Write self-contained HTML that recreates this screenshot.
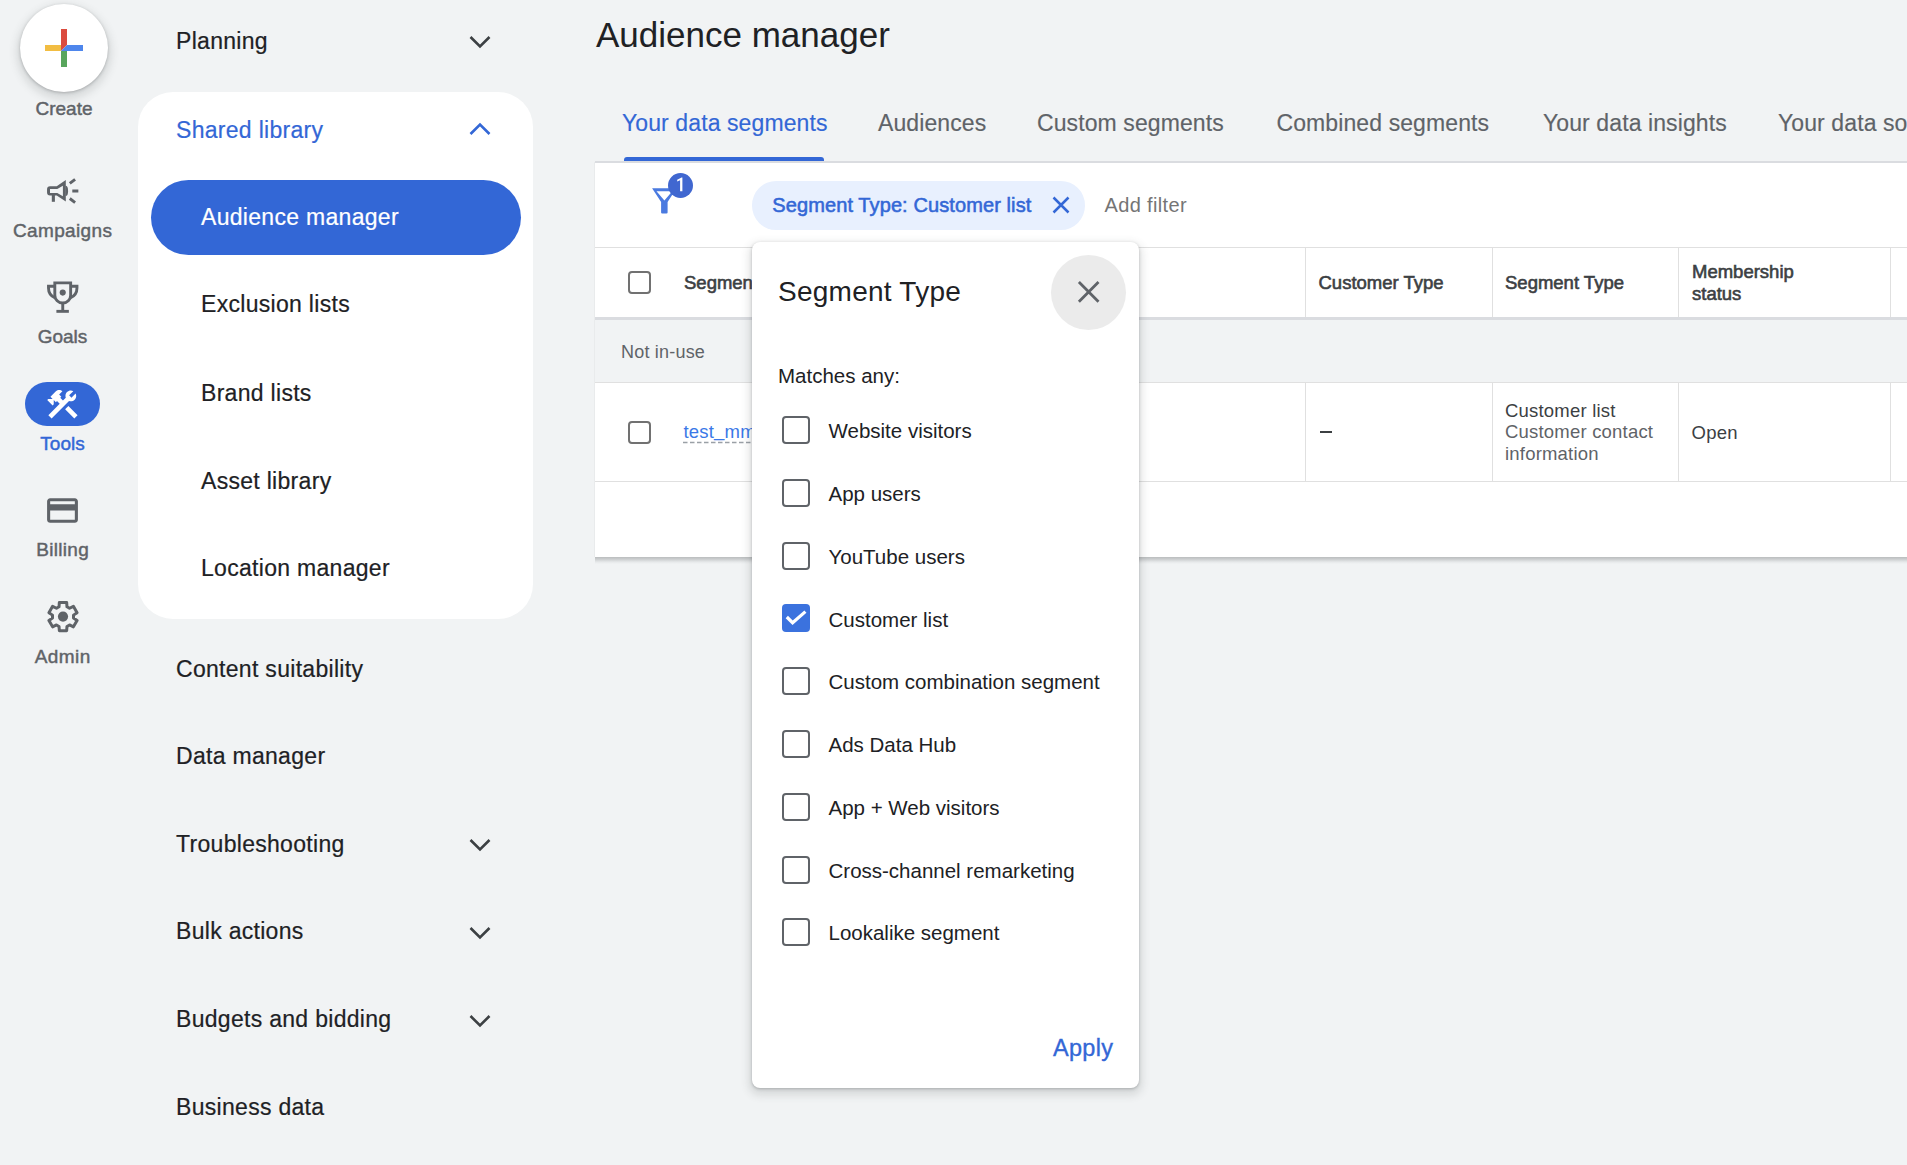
<!DOCTYPE html>
<html><head><meta charset="utf-8">
<style>
html,body{margin:0;padding:0;}
body{width:1907px;height:1165px;overflow:hidden;background:#f1f3f4;position:relative;font-family:"Liberation Sans",sans-serif;color:#202124;}
.a{position:absolute;}
.t{position:absolute;white-space:nowrap;line-height:normal;}
.cb{position:absolute;box-sizing:border-box;border:2.9px solid #5f6368;border-radius:4px;}
.vl{position:absolute;width:1px;background:#e0e0e0;}
</style></head><body>

<div class="a" style="left:20px;top:4px;width:88px;height:88px;border-radius:50%;background:#fff;box-shadow:0 1px 3px rgba(60,64,67,.30),0 4px 8px 3px rgba(60,64,67,.15);"></div>
<svg class="a" style="left:45px;top:29px" width="38" height="38" viewBox="0 0 38 38">
<rect x="16" y="0" width="6" height="16" fill="#db4b3e"/>
<polygon points="16,16 22,16 16,22" fill="#db4b3e"/>
<rect x="0" y="16" width="16" height="6" fill="#f2bd42"/>
<rect x="16" y="22" width="6" height="16" fill="#58a55c"/>
<rect x="22" y="16" width="16" height="6" fill="#4e86ec"/>
<polygon points="22,16 22,22 16,22" fill="#4e86ec"/>
</svg>
<div class="t" style="left:0;width:128px;text-align:center;top:98.31px;font-size:19px;color:#5f6368;letter-spacing:0px;text-indent:0px;-webkit-text-stroke:0.45px #5f6368">Create</div>
<svg class="a" style="left:42px;top:172px" width="42" height="38" viewBox="0 0 42 38">
<path fill="#5f6368" fill-rule="evenodd" d="M5.05,17.2 Q5.05,14.2 8.05,14.2 L14.7,14.2 L23.8,8 L23.8,29.5 L14.7,23.6 L8.05,23.6 Q5.05,23.6 5.05,20.6 Z M8,17.1 L15.3,17.1 L20.9,13.7 L20.9,24.3 L15.3,20.9 L8,20.9 Z"/>
<path fill="#5f6368" d="M23.5,13.7 A2.6 5.2 0 0 1 23.5,24.1 Z"/>
<rect x="9.8" y="22.5" width="3.1" height="7.3" fill="#5f6368"/>
<path stroke="#5f6368" stroke-width="2.9" d="M27.8,11.4 L33.1,7.3 M30.3,19.07 H36.35 M27.8,26.5 L33.1,30.6"/>
</svg>
<div class="t" style="left:0;width:125px;text-align:center;top:219.71px;font-size:19px;color:#5f6368;letter-spacing:0.35px;text-indent:0.35px;-webkit-text-stroke:0.45px #5f6368">Campaigns</div>
<svg class="a" style="left:42px;top:276px" width="42" height="42" viewBox="0 0 42 42">
<path fill="none" stroke="#5f6368" stroke-width="2.9" d="M12.81,6.85 H28.65 V19.13 A7.92 7.92 0 0 1 12.81 19.13 Z"/>
<path fill="none" stroke="#5f6368" stroke-width="2.9" d="M12.81,10.28 H6.5 V12 C6.5,16.5 9,20 12.81,21.8 M28.65,10.28 H34.96 V12 C34.96,16.5 32.46,20 28.65,21.8"/>
<circle cx="20.73" cy="16.58" r="3.06" fill="#5f6368"/>
<rect x="19.3" y="26.5" width="2.9" height="8" fill="#5f6368"/>
<rect x="14.4" y="33.9" width="12.46" height="2.9" fill="#5f6368"/>
</svg>
<div class="t" style="left:0;width:125px;text-align:center;top:325.70px;font-size:19px;color:#5f6368;letter-spacing:0px;text-indent:0px;-webkit-text-stroke:0.45px #5f6368">Goals</div>
<div class="a" style="left:25px;top:382px;width:75px;height:44px;border-radius:22px;background:#3367d6;"></div>
<svg class="a" style="left:44.4px;top:385.8px" width="36.8" height="36.8" viewBox="0 0 24 24"><path fill="#fff" d="M13.783 15.172l2.121-2.121 5.996 5.996-2.121 2.121zM17.5 10c1.93 0 3.5-1.57 3.5-3.5 0-.58-.16-1.12-.41-1.6l-2.7 2.7-1.49-1.49 2.7-2.7c-.48-.25-1.02-.41-1.6-.41C15.57 3 14 4.57 14 6.5c0 .41.08.8.21 1.16l-1.85 1.85-1.78-1.78.71-.71-1.41-1.41L12 3.49c-1.17-1.17-3.07-1.17-4.24 0L4.22 7.03l1.41 1.41H2.81l-.71.71 3.54 3.54.71-.71V9.15l1.41 1.41.71-.71 1.78 1.78-7.41 7.41 2.12 2.12L16.34 9.79c.36.13.75.21 1.16.21z"/></svg>
<div class="t" style="left:0;width:125px;text-align:center;top:432.61px;font-size:19px;color:#3367d6;letter-spacing:0px;text-indent:0px;-webkit-text-stroke:0.45px #3367d6">Tools</div>
<svg class="a" style="left:44.1px;top:491.7px" width="37" height="37" viewBox="0 0 24 24"><path fill="#5f6368" d="M20 4H4c-1.11 0-1.99.89-1.99 2L2 18c0 1.11.89 2 2 2h16c1.11 0 2-.89 2-2V6c0-1.11-.89-2-2-2zm0 14H4v-6h16v6zm0-10H4V6h16v2z"/></svg>
<div class="t" style="left:0;width:125px;text-align:center;top:538.80px;font-size:19px;color:#5f6368;letter-spacing:0.3px;text-indent:0.3px;-webkit-text-stroke:0.45px #5f6368">Billing</div>
<svg class="a" style="left:47px;top:600px" width="32" height="34" viewBox="0 0 32 34">
<path fill="none" stroke="#5f6368" stroke-width="3" stroke-linejoin="round" d="M12.34,2.47 L19.66,2.47 L19.97,6.77 L22.53,8.25 L26.41,6.37 L30.07,12.70 L26.50,15.12 L26.50,18.08 L30.07,20.50 L26.41,26.83 L22.53,24.95 L19.97,26.43 L19.66,30.73 L12.34,30.73 L12.03,26.43 L9.47,24.95 L5.59,26.83 L1.93,20.50 L5.50,18.08 L5.50,15.12 L1.93,12.70 L5.59,6.37 L9.47,8.25 L12.03,6.77 Z"/>
<circle cx="16" cy="16.6" r="5.1" fill="#5f6368"/>
</svg>
<div class="t" style="left:0;width:125px;text-align:center;top:645.60px;font-size:19px;color:#5f6368;letter-spacing:0.4px;text-indent:0.4px;-webkit-text-stroke:0.45px #5f6368">Admin</div>
<div class="t" style="left:176px;top:28.29px;font-size:23px;color:#202124;letter-spacing:0.3px;-webkit-text-stroke:0.2px #202124;">Planning</div>
<svg class="a" style="left:468.6px;top:35px" width="22" height="14" viewBox="0 0 22 14"><polyline points="1.5,2 11,11.5 20.5,2" fill="none" stroke="#3c4043" stroke-width="2.6"/></svg>
<div class="a" style="left:137.5px;top:91.7px;width:395.4px;height:527.3px;background:#fff;border-radius:35px;"></div>
<div class="t" style="left:176px;top:117.19px;font-size:23px;color:#3367d6;letter-spacing:0.3px;-webkit-text-stroke:0.2px #3367d6;">Shared library</div>
<svg class="a" style="left:468.6px;top:122px" width="22" height="14" viewBox="0 0 22 14"><polyline points="1.5,12 11,2.5 20.5,12" fill="none" stroke="#3367d6" stroke-width="2.6"/></svg>
<div class="a" style="left:151px;top:180px;width:370px;height:75px;border-radius:37.5px;background:#3367d6;"></div>
<div class="t" style="left:201px;top:204.49px;font-size:23px;color:#fff;letter-spacing:0.3px;-webkit-text-stroke:0.2px #fff;">Audience manager</div>
<div class="t" style="left:201px;top:291.49px;font-size:23px;color:#202124;letter-spacing:0.3px;-webkit-text-stroke:0.2px #202124;">Exclusion lists</div>
<div class="t" style="left:201px;top:380.29px;font-size:23px;color:#202124;letter-spacing:0.3px;-webkit-text-stroke:0.2px #202124;">Brand lists</div>
<div class="t" style="left:201px;top:467.79px;font-size:23px;color:#202124;letter-spacing:0.3px;-webkit-text-stroke:0.2px #202124;">Asset library</div>
<div class="t" style="left:201px;top:554.78px;font-size:23px;color:#202124;letter-spacing:0.3px;-webkit-text-stroke:0.2px #202124;">Location manager</div>
<div class="t" style="left:176px;top:655.58px;font-size:23px;color:#202124;letter-spacing:0.3px;-webkit-text-stroke:0.2px #202124;">Content suitability</div>
<div class="t" style="left:176px;top:742.78px;font-size:23px;color:#202124;letter-spacing:0.3px;-webkit-text-stroke:0.2px #202124;">Data manager</div>
<div class="t" style="left:176px;top:830.58px;font-size:23px;color:#202124;letter-spacing:0.3px;-webkit-text-stroke:0.2px #202124;">Troubleshooting</div>
<svg class="a" style="left:468.6px;top:838px" width="22" height="14" viewBox="0 0 22 14"><polyline points="1.5,2 11,11.5 20.5,2" fill="none" stroke="#3c4043" stroke-width="2.6"/></svg>
<div class="t" style="left:176px;top:918.48px;font-size:23px;color:#202124;letter-spacing:0.3px;-webkit-text-stroke:0.2px #202124;">Bulk actions</div>
<svg class="a" style="left:468.6px;top:926px" width="22" height="14" viewBox="0 0 22 14"><polyline points="1.5,2 11,11.5 20.5,2" fill="none" stroke="#3c4043" stroke-width="2.6"/></svg>
<div class="t" style="left:176px;top:1006.38px;font-size:23px;color:#202124;letter-spacing:0.3px;-webkit-text-stroke:0.2px #202124;">Budgets and bidding</div>
<svg class="a" style="left:468.6px;top:1014px" width="22" height="14" viewBox="0 0 22 14"><polyline points="1.5,2 11,11.5 20.5,2" fill="none" stroke="#3c4043" stroke-width="2.6"/></svg>
<div class="t" style="left:176px;top:1094.28px;font-size:23px;color:#202124;letter-spacing:0.3px;-webkit-text-stroke:0.2px #202124;">Business data</div>
<div class="t" style="left:596px;top:15.32px;font-size:35px;color:#202124;">Audience manager</div>
<div class="t" style="left:622px;top:109.78px;font-size:23px;color:#3367d6;letter-spacing:0.1px;-webkit-text-stroke:0.15px #3367d6;">Your data segments</div>
<div class="t" style="left:878px;top:109.78px;font-size:23px;color:#5f6368;letter-spacing:0.1px;-webkit-text-stroke:0.15px #5f6368;">Audiences</div>
<div class="t" style="left:1037px;top:109.78px;font-size:23px;color:#5f6368;letter-spacing:0.1px;-webkit-text-stroke:0.15px #5f6368;">Custom segments</div>
<div class="t" style="left:1276.5px;top:109.78px;font-size:23px;color:#5f6368;letter-spacing:0.1px;-webkit-text-stroke:0.15px #5f6368;">Combined segments</div>
<div class="t" style="left:1543px;top:109.78px;font-size:23px;color:#5f6368;letter-spacing:0.1px;-webkit-text-stroke:0.15px #5f6368;">Your data insights</div>
<div class="t" style="left:1778px;top:109.78px;font-size:23px;color:#5f6368;letter-spacing:0.1px;-webkit-text-stroke:0.15px #5f6368;">Your data sources</div>
<div class="a" style="left:624px;top:156.5px;width:200px;height:5px;background:#3367d6;border-radius:3px 3px 0 0;"></div>
<div class="a" style="left:595px;top:162px;width:1400px;height:395px;background:#fff;box-shadow:-0.5px 0 0 rgba(60,64,67,.08);"></div>
<div class="a" style="left:595px;top:557px;width:1312px;height:7px;background:linear-gradient(to bottom, rgba(60,64,67,.30) 0px, rgba(60,64,67,.22) 2px, rgba(60,64,67,.06) 5px, rgba(60,64,67,0) 7px);"></div>
<div class="a" style="left:595px;top:161px;width:1312px;height:2px;background:#dadce0;"></div>
<svg class="a" style="left:650px;top:185px" width="30" height="30" viewBox="0 0 30 30">
<path fill="#4a7ae0" fill-rule="evenodd" d="M2.1,3.2 L26.5,3.2 L17.6,17 L17.6,27.5 Q17.6,28.6 16.5,28.6 L12.2,28.6 Q11.1,28.6 11.1,27.5 L11.1,17 Z M6.5,6.3 L22.3,6.3 L14.4,15.6 Z"/>
</svg>
<div class="a" style="left:667.8px;top:172.7px;width:25.2px;height:25.2px;border-radius:50%;background:#4067d0;"></div>
<svg class="a" style="left:667.8px;top:172.7px" width="25.2" height="25.2" viewBox="0 0 25.2 25.2"><path fill="#fff" d="M9.2,6.8 L13.6,4.4 H14.4 V18.3 H12.1 V7.3 L9.2,8.4 Z"/></svg>
<div class="a" style="left:752px;top:181px;width:332.5px;height:48.5px;border-radius:24.25px;background:#e8f0fe;"></div>
<div class="t" style="left:772.3px;top:193.70px;font-size:20px;color:#3367d6;letter-spacing:0.1px;-webkit-text-stroke:0.55px #3367d6;">Segment Type: Customer list</div>
<svg class="a" style="left:1051px;top:195.3px" width="20" height="20" viewBox="0 0 20 20"><path d="M2.5 2.5l15 15M17.5 2.5l-15 15" stroke="#3367d6" stroke-width="2.5"/></svg>
<div class="t" style="left:1104.5px;top:194.40px;font-size:20px;color:#757575;letter-spacing:0.35px;">Add filter</div>
<div class="a" style="left:595px;top:247px;width:1312px;height:1px;background:#e0e0e0;"></div>
<div class="cb" style="left:628px;top:271px;width:23px;height:23px;border-width:2.3px;border-color:#717171;"></div>
<div class="t" style="left:684px;top:272.06px;font-size:18.5px;color:#3c4043;-webkit-text-stroke:0.6px #3c4043;">Segment name</div>
<div class="vl" style="left:1304.5px;top:248px;height:69px"></div>
<div class="vl" style="left:1304.5px;top:383px;height:99px"></div>
<div class="vl" style="left:1491.5px;top:248px;height:69px"></div>
<div class="vl" style="left:1491.5px;top:383px;height:99px"></div>
<div class="vl" style="left:1678px;top:248px;height:69px"></div>
<div class="vl" style="left:1678px;top:383px;height:99px"></div>
<div class="vl" style="left:1889.5px;top:248px;height:69px"></div>
<div class="vl" style="left:1889.5px;top:383px;height:99px"></div>
<div class="t" style="left:1318.5px;top:272.06px;font-size:18.5px;color:#3c4043;-webkit-text-stroke:0.6px #3c4043;">Customer Type</div>
<div class="t" style="left:1505px;top:272.06px;font-size:18.5px;color:#3c4043;-webkit-text-stroke:0.6px #3c4043;">Segment Type</div>
<div class="t" style="left:1692px;top:261.19px;font-size:18.5px;color:#3c4043;line-height:21.4px;-webkit-text-stroke:0.6px #3c4043;">Membership<br>status</div>
<div class="a" style="left:595px;top:317px;width:1312px;height:2.5px;background:#dadce0;"></div>
<div class="a" style="left:595px;top:319.5px;width:1312px;height:63px;background:#f1f3f4;"></div>
<div class="t" style="left:621px;top:341.61px;font-size:18px;color:#5f6368;letter-spacing:0.2px;">Not in-use</div>
<div class="a" style="left:595px;top:382px;width:1312px;height:1px;background:#e0e0e0;"></div>
<div class="cb" style="left:628px;top:420.6px;width:23px;height:23px;border-width:2.3px;border-color:#717171;"></div>
<div class="t" style="left:683.4px;top:421.06px;font-size:18.5px;color:#3b78e7;letter-spacing:0.2px;">test<span style="position:relative;top:-2px">_</span>mm<span style="position:relative;top:-2px">_</span>customer<span style="position:relative;top:-2px">_</span>list</div>
<svg class="a" style="left:683px;top:440.5px" width="200" height="3"><line x1="0" y1="1.5" x2="200" y2="1.5" stroke="#9aa0a6" stroke-width="1.5" stroke-dasharray="4.5 2.5"/></svg>
<div class="a" style="left:1319.5px;top:431.4px;width:12.2px;height:1.3px;background:#3c4043;"></div>
<div class="t" style="left:1505px;top:399.74px;font-size:18.5px;color:#3c4043;line-height:21.7px;letter-spacing:0.2px;">Customer list<br><span style="color:#5f6368">Customer contact<br>information</span></div>
<div class="t" style="left:1691.6px;top:421.66px;font-size:18.5px;color:#3c4043;letter-spacing:0.2px;">Open</div>
<div class="a" style="left:595px;top:481px;width:1312px;height:1px;background:#e0e0e0;"></div>
<div class="a" style="left:752px;top:242px;width:387px;height:846px;background:#fff;border-radius:8px;box-shadow:0 1px 3px rgba(60,64,67,.3),0 4px 8px 3px rgba(60,64,67,.15);"></div>
<div class="t" style="left:778px;top:276.36px;font-size:28px;color:#202124;letter-spacing:0.25px;">Segment Type</div>
<div class="a" style="left:1050.5px;top:254.5px;width:75px;height:75px;border-radius:50%;background:#ebebeb;"></div>
<svg class="a" style="left:1076px;top:279px" width="26" height="26" viewBox="0 0 26 26"><path d="M2.9,3.1 L22.5,22.7 M22.5,3.1 L2.9,22.7" stroke="#5f6368" stroke-width="2.8"/></svg>
<div class="t" style="left:778px;top:363.95px;font-size:20.5px;color:#202124;">Matches any:</div>
<div class="cb" style="left:782.2px;top:416.30px;width:28px;height:28.2px;"></div>
<div class="t" style="left:828.5px;top:419.45px;font-size:20.5px;color:#202124;">Website visitors</div>
<div class="cb" style="left:782.2px;top:479.05px;width:28px;height:28.2px;"></div>
<div class="t" style="left:828.5px;top:482.20px;font-size:20.5px;color:#202124;">App users</div>
<div class="cb" style="left:782.2px;top:541.80px;width:28px;height:28.2px;"></div>
<div class="t" style="left:828.5px;top:544.95px;font-size:20.5px;color:#202124;">YouTube users</div>
<div class="a" style="left:782.2px;top:603.75px;width:28px;height:28.5px;border-radius:4px;background:#3b72de;"></div>
<svg class="a" style="left:782.2px;top:603.75px" width="28" height="28" viewBox="0 0 28 28"><path d="M4.8,13 L10.6,18.7 L23.4,7.6" fill="none" stroke="#fff" stroke-width="3.2"/></svg>
<div class="t" style="left:828.5px;top:607.70px;font-size:20.5px;color:#202124;">Customer list</div>
<div class="cb" style="left:782.2px;top:667.30px;width:28px;height:28.2px;"></div>
<div class="t" style="left:828.5px;top:670.45px;font-size:20.5px;color:#202124;">Custom combination segment</div>
<div class="cb" style="left:782.2px;top:730.05px;width:28px;height:28.2px;"></div>
<div class="t" style="left:828.5px;top:733.20px;font-size:20.5px;color:#202124;">Ads Data Hub</div>
<div class="cb" style="left:782.2px;top:792.80px;width:28px;height:28.2px;"></div>
<div class="t" style="left:828.5px;top:795.95px;font-size:20.5px;color:#202124;">App &#43; Web visitors</div>
<div class="cb" style="left:782.2px;top:855.55px;width:28px;height:28.2px;"></div>
<div class="t" style="left:828.5px;top:858.70px;font-size:20.5px;color:#202124;">Cross-channel remarketing</div>
<div class="cb" style="left:782.2px;top:918.30px;width:28px;height:28.2px;"></div>
<div class="t" style="left:828.5px;top:921.45px;font-size:20.5px;color:#202124;">Lookalike segment</div>
<div class="t" style="left:1053px;top:1035.43px;font-size:23.5px;color:#3367d6;letter-spacing:0.3px;-webkit-text-stroke:0.35px #3367d6;">Apply</div>
</body></html>
